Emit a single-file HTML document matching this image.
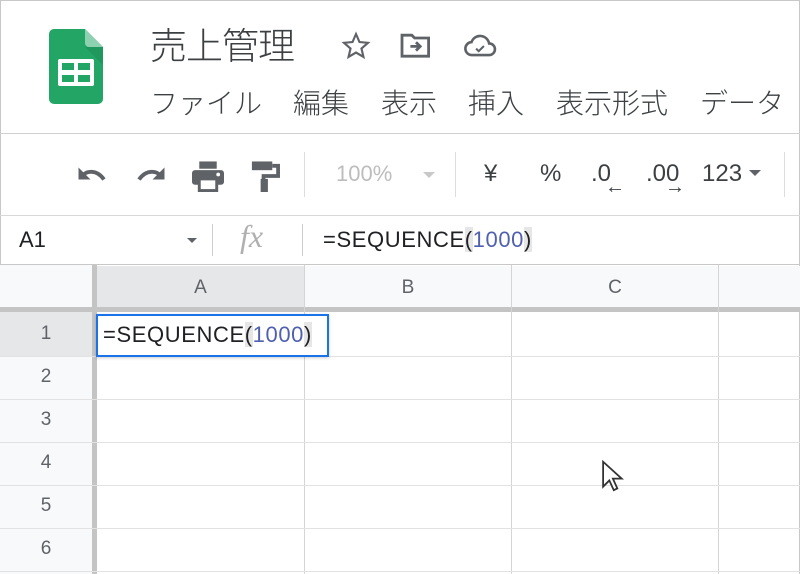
<!DOCTYPE html>
<html><head><meta charset="utf-8"><style>
*{margin:0;padding:0;box-sizing:border-box}
body{width:800px;height:574px;overflow:hidden;background:#fff;font-family:"Liberation Sans","Noto Sans CJK JP",sans-serif;position:relative;color:#3c4043}
.a{position:absolute}
.jp{font-family:"Noto Sans CJK JP",sans-serif;color:#3c4043;font-weight:300}
.hl{background:#e6e6e6}
.num{color:#5060b0}
.vl{position:absolute;width:1px;background:#e2e2e2}
.hr{position:absolute;height:1px;background:#e2e2e2}
.rh{position:absolute;left:0;width:92px;text-align:center;font-size:19px;color:#5f6368}
.ch{position:absolute;top:266px;height:41px;line-height:44px;text-align:center;font-size:19px;color:#5f6368;background:#f8f9fa}
.m{position:absolute;top:82px;font-size:28px;line-height:40px}
.f{font-size:22px;color:#202124;letter-spacing:.6px;white-space:nowrap}
</style></head><body>
<div class="a" style="left:0;top:0;width:800px;height:574px;border:1px solid #c8c8c8;border-bottom:none"></div>
<svg class="a" style="left:49px;top:29px" width="54" height="75" viewBox="0 0 54 75">
<path d="M5 0H36L54 18V70a5 5 0 0 1-5 5H5a5 5 0 0 1-5-5V5a5 5 0 0 1 5-5z" fill="#23a566"/>
<path d="M36 0V14a4 4 0 0 0 4 4H54z" fill="#8ed1b1"/>
<path d="M36 18L54 36V18z" fill="#1e8e57" opacity=".6"/>
<rect x="9" y="30" width="36" height="27" rx="2" fill="#fff"/>
<rect x="13" y="34" width="12" height="7" fill="#23a566"/><rect x="29" y="34" width="12" height="7" fill="#23a566"/>
<rect x="13" y="46" width="12" height="7" fill="#23a566"/><rect x="29" y="46" width="12" height="7" fill="#23a566"/>
</svg>
<div class="a jp" style="left:150px;top:18px;font-size:37px;line-height:50px;letter-spacing:-1px">売上管理</div>
<svg class="a" style="left:338px;top:30px" width="36" height="32" viewBox="0 0 24 24"><path d="M12 3l2.6 6 6.4.6-4.9 4.3 1.5 6.3L12 16.9 6.4 20.2l1.5-6.3L3 9.6l6.4-.6z" fill="none" stroke="#5f6368" stroke-width="1.6"/></svg>
<svg class="a" style="left:399px;top:31px" width="34" height="28" viewBox="0 0 24 20"><path d="M2 3h7l2 2h10v13H2z" fill="none" stroke="#5f6368" stroke-width="2"/><path d="M8 11h7M12 8l3 3-3 3" fill="none" stroke="#5f6368" stroke-width="2"/></svg>
<svg class="a" style="left:463px;top:33px" width="34" height="26" viewBox="0 0 26 20"><path d="M7 17a5 5 0 0 1-.5-10A7 7 0 0 1 20 8a4.5 4.5 0 0 1 0 9z" fill="none" stroke="#5f6368" stroke-width="2"/><path d="M10 12l2 2 4-4" fill="none" stroke="#5f6368" stroke-width="1.6"/></svg>
<div class="m jp" style="left:150px">ファイル</div>
<div class="m jp" style="left:293px">編集</div>
<div class="m jp" style="left:381px">表示</div>
<div class="m jp" style="left:468px">挿入</div>
<div class="m jp" style="left:556px">表示形式</div>
<div class="m jp" style="left:700px">データ</div>
<div class="a" style="left:0;top:133px;width:800px;height:1px;background:#d0d0d0"></div>
<svg class="a" style="left:74px;top:162px" width="36" height="26" viewBox="0 0 24 16"><path d="M5 9c3-4 10-5 15 2" fill="none" stroke="#5f6368" stroke-width="2.6"/><path d="M3 3l0 8 8 0z" fill="#5f6368"/></svg>
<svg class="a" style="left:133px;top:162px" width="36" height="26" viewBox="0 0 24 16"><path d="M19 9c-3-4-10-5-15 2" fill="none" stroke="#5f6368" stroke-width="2.6"/><path d="M21 3l0 8-8 0z" fill="#5f6368"/></svg>
<svg class="a" style="left:190px;top:160px" width="36" height="32" viewBox="0 0 24 22"><rect x="6" y="1" width="12" height="5" fill="#5f6368"/><rect x="1" y="7" width="22" height="10" rx="2" fill="#5f6368"/><rect x="6" y="13" width="12" height="8" fill="#fff" stroke="#5f6368" stroke-width="2"/><circle cx="19" cy="10" r="1.3" fill="#fff"/></svg>
<svg class="a" style="left:250px;top:160px" width="30" height="32" viewBox="0 0 20 22"><rect x="1" y="1" width="14" height="6" fill="#5f6368"/><path d="M15 4h4v7H9v10" fill="none" stroke="#5f6368" stroke-width="2.6"/><rect x="7" y="13" width="5" height="9" fill="#5f6368"/></svg>
<div class="a" style="left:304px;top:152px;width:1px;height:45px;background:#ddd"></div>
<div class="a" style="left:336px;top:161px;font-size:22px;color:#bdbdbd">100%</div>
<div class="a" style="left:423px;top:172px;border:6px solid transparent;border-top:6px solid #c8c8c8"></div>
<div class="a" style="left:455px;top:152px;width:1px;height:45px;background:#ddd"></div>
<div class="a" style="left:484px;top:160px;font-size:24px;color:#3c4043">¥</div>
<div class="a" style="left:540px;top:160px;font-size:24px;color:#3c4043">%</div>
<div class="a" style="left:591px;top:160px;font-size:24px;color:#3c4043">.0</div>
<div class="a" style="left:605px;top:176px;font-size:20px;color:#3c4043;font-weight:bold">←</div>
<div class="a" style="left:646px;top:160px;font-size:24px;color:#3c4043">.00</div>
<div class="a" style="left:665px;top:176px;font-size:20px;color:#3c4043;font-weight:bold">→</div>
<div class="a" style="left:702px;top:160px;font-size:24px;color:#3c4043">123</div>
<div class="a" style="left:749px;top:170px;border:6px solid transparent;border-top:6px solid #5f6368"></div>
<div class="a" style="left:784px;top:152px;width:1px;height:45px;background:#ddd"></div>
<div class="a" style="left:0;top:215px;width:800px;height:1px;background:#d8d8d8"></div>
<div class="a" style="left:19px;top:227px;font-size:22px;color:#202124">A1</div>
<div class="a" style="left:187px;top:238px;border:5px solid transparent;border-top:5px solid #5f6368"></div>
<div class="a" style="left:212px;top:224px;width:1px;height:32px;background:#ccc"></div>
<div class="a" style="left:240px;top:218px;font-size:32px;font-style:italic;font-family:'Liberation Serif',serif;color:#b0b0b0">fx</div>
<div class="a" style="left:302px;top:224px;width:1px;height:32px;background:#ccc"></div>
<div class="a f" style="left:323px;top:227px">=SEQUENCE<span class="hl">(</span><span class="num">1000</span><span class="hl">)</span></div>
<div class="a" style="left:0;top:264px;width:800px;height:1px;background:#c8c8c8"></div>
<div class="a" style="left:0;top:265px;width:92px;height:42px;background:#f8f9fa"></div>
<div class="ch" style="left:97px;width:207px;background:#e6e7e9">A</div>
<div class="ch" style="left:305px;width:206px">B</div>
<div class="ch" style="left:512px;width:206px">C</div>
<div class="ch" style="left:719px;width:81px"></div>
<div class="a" style="left:0;top:307px;width:800px;height:5px;background:#c4c4c4"></div>
<div class="a" style="left:92px;top:265px;width:5px;height:309px;background:#c4c4c4"></div>
<div class="a" style="left:0;top:312px;width:92px;height:262px;background:#f8f9fa"></div>
<div class="a" style="left:0;top:312px;width:92px;height:44px;background:#e6e7e9"></div>
<div class="vl" style="left:304px;top:265px;height:309px;background:#d5d5d5"></div>
<div class="vl" style="left:511px;top:265px;height:309px;background:#d5d5d5"></div>
<div class="vl" style="left:718px;top:265px;height:309px;background:#d5d5d5"></div>
<div class="hr" style="left:0;top:356px;width:800px"></div>
<div class="hr" style="left:0;top:399px;width:800px"></div>
<div class="hr" style="left:0;top:442px;width:800px"></div>
<div class="hr" style="left:0;top:485px;width:800px"></div>
<div class="hr" style="left:0;top:528px;width:800px"></div>
<div class="hr" style="left:0;top:571px;width:800px"></div>
<div class="rh" style="top:323px">1</div>
<div class="rh" style="top:366px">2</div>
<div class="rh" style="top:409px">3</div>
<div class="rh" style="top:452px">4</div>
<div class="rh" style="top:495px">5</div>
<div class="rh" style="top:538px">6</div>
<div class="a" style="left:96px;top:314px;width:233px;height:43px;border:2px solid #1a73e8;background:#fff;box-shadow:0 1px 3px rgba(0,0,0,.2)"></div>
<div class="a f" style="left:103px;top:322px;font-size:22px">=SEQUENCE<span class="hl">(</span><span class="num">1000</span><span class="hl">)</span></div>
<svg class="a" style="left:600px;top:460px" width="24" height="32" viewBox="0 0 12 18"><path d="M1 1v14l3.5-3.5 2.5 5.5 2-1-2.5-5.5h5z" fill="#fff" stroke="#333" stroke-width="1"/></svg>
</body></html>
